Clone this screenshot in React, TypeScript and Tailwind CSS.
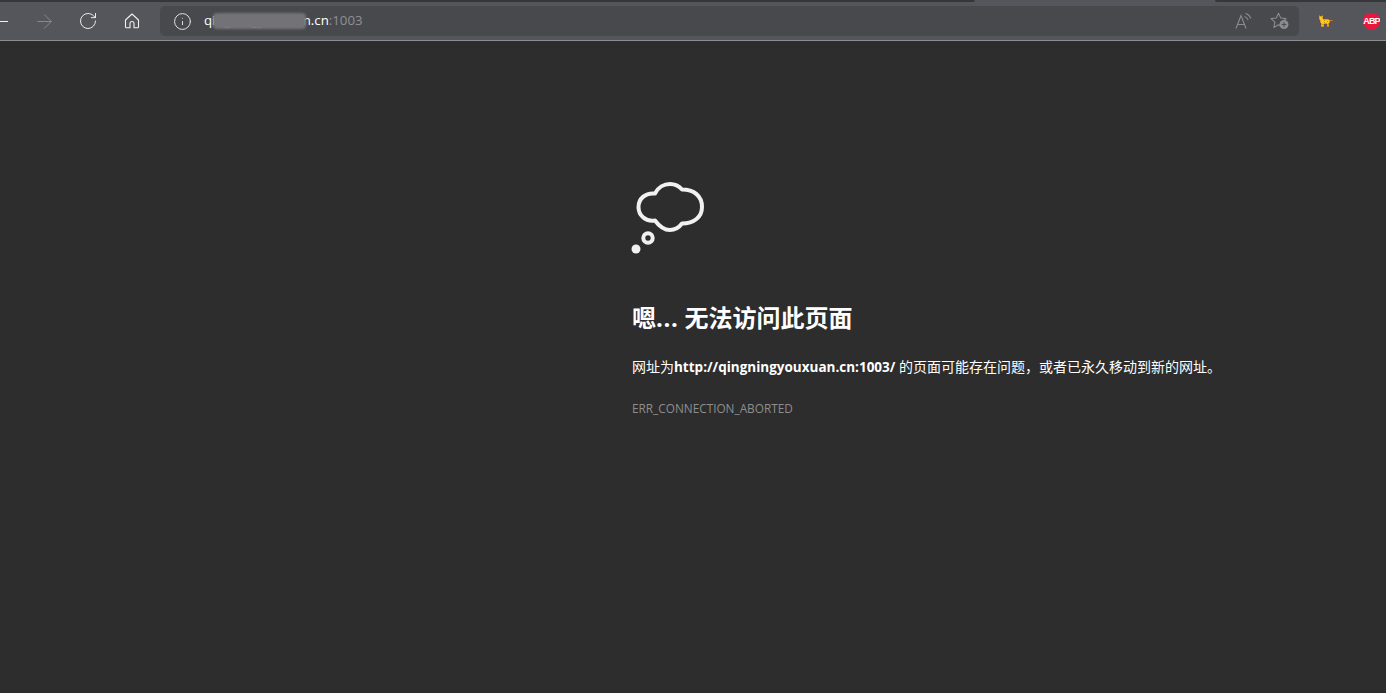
import { ArrowRight, RotateCw, Info } from "lucide-react";

const cjk = "font-['Open_Sans','Noto_Sans_CJK_SC',sans-serif]";

function HomeIcon() {
  return (
    <svg width="16" height="16" viewBox="0 0 16 16" fill="none" stroke="#f0f0f0" strokeWidth="1.100" strokeLinejoin="round">
      <path d="M8 1 1.500 7v7a.8.8 0 0 0 .8.8H6V10.500a2 2 0 0 1 4 0v4.300h3.700a.8.800 0 0 0 .8-.8V7z" />
    </svg>
  );
}

function ReadAloud() {
  return (
    <svg width="20" height="18" viewBox="0 0 20 18" fill="none" stroke="#8b8c90" strokeWidth="1.100">
      <path d="M2 16.500 7 3.500l5 13M3.500 12.500h7" />
      <path d="M10.500 4.500c1.800.5 3 1.700 3.600 3.500M11.500 1.500c2.700.7 4.400 2.500 5.300 5" />
    </svg>
  );
}

function StarAdd() {
  return (
    <svg width="20" height="18" viewBox="0 0 20 18" fill="none">
      <path d="M8.500 1.200 10.700 6l5.300.6-3.900 3.600 1 5.200-4.600-2.600-4.600 2.600 1-5.200L1 6.600l5.300-.6z" stroke="#8b8c90" strokeWidth="1.100" strokeLinejoin="round" />
      <circle cx="14" cy="12.500" r="4.500" fill="#8b8c90" />
      <path d="M14 10.200v4.600M11.700 12.500h4.600" stroke="#4a4b4f" strokeWidth="1.100" />
    </svg>
  );
}

function Cat() {
  return (
    <svg width="16" height="13" viewBox="0 0 16 13">
      <path d="M1 0h1v1h2V0h1v4h6v1h4v1h-3v2h-1v4H9V9H6v3H3V8H2V5H1z" fill="#f7cf12" stroke="#8a3a50" strokeWidth=".6" />
      <path d="M6 5h1v1H6zM9 6h1v1H9zM6 7h1v1H6zM8 8h1v1H8zM4 9h1v1H4zM10 9h1v1h-1z" fill="#c9920a" />
    </svg>
  );
}

function Abp() {
  return (
    <div className="relative flex h-[17px] w-[17px] items-center justify-center bg-[#e8173f] [clip-path:polygon(30%_0,70%_0,100%_30%,100%_70%,70%_100%,30%_100%,0_70%,0_30%)]">
      <span className="font-['Liberation_Sans',sans-serif] text-[9px] leading-none font-bold tracking-[-0.900px] text-white">ABP</span>
    </div>
  );
}

function Cloud() {
  return (
    <svg width="76" height="80" viewBox="0 0 76 80" fill="none" stroke="#f1f1f1">
      <path
        d="M27 15.500C30 9.500 36 6 42 6c5 0 9 2 12 5.500C66 11.500 74 18 74 29c0 10-8 16.500-20 16.500C51 49.500 47 52 42 52c-6 0-11-4-15-9.500C17 44 10.500 37 10.500 29c0-8 6.500-14.500 16.500-13.500z"
        strokeWidth="4"
        strokeLinejoin="round"
      />
      <circle cx="20" cy="60" r="4.700" strokeWidth="4" />
      <circle cx="8" cy="71" r="4.500" fill="#f1f1f1" stroke="none" />
    </svg>
  );
}

export default function App() {
  return (
    <div className={`flex h-[693px] w-[1386px] flex-col overflow-hidden bg-[#2d2d2d] ${cjk}`}>
      <header className="relative h-[41px] shrink-0 border-b border-[#8d8e92] bg-[#55565b]">
        <div className="flex h-[2px] justify-between">
          <div className="h-full w-[975px] rounded-br bg-[#36373a]" />
          <div className="h-full w-[171px] rounded-bl bg-[#36373a]" />
        </div>
        <div className="flex h-[38px] items-center">
          <div className="mr-[25px] h-px w-2 bg-[#f0f0f0]" />
          <ArrowRight size={23} strokeWidth={0.9} className="mr-[22px] text-[#8f9094]" />
          <RotateCw size={20} strokeWidth={1.150} className="mr-[26px] text-[#f0f0f0]" />
          <div className="mr-[20px]">
            <HomeIcon />
          </div>
          <div className="flex h-[30px] w-[1139px] items-center rounded-[5px] bg-[#48494d] pl-[13px]">
            <Info size={19} strokeWidth={1.150} className="mr-[12px] text-[#f0f0f0]" />
            <div className="relative text-[13.250px] leading-none text-[#8f9094]">
              <span className="text-white">qingningyouxuan.cn</span>:1003
              <div className="absolute top-[-1px] left-[9px] h-[16px] w-[93px] rounded-sm bg-[#737377] blur-[1px]" />
            </div>
            <div className="ml-auto flex items-center gap-[16px] pr-[9px]">
              <ReadAloud />
              <StarAdd />
            </div>
          </div>
          <div className="ml-[19px] flex items-center gap-[29px]">
            <Cat />
            <Abp />
          </div>
        </div>
      </header>
      <main className="flex flex-1 flex-col pt-[137px] pl-[632px]">
        <div className="-ml-[4px]">
          <Cloud />
        </div>
        <h1 className="mt-[44px] text-[24px] leading-[32px] font-bold text-white">
          嗯<span className="tracking-[0.600px]">...</span> 无法访问此页面
        </h1>
        <p className="mt-[23px] text-[14px] leading-[20px] text-white">
          网址为<b className="text-[13.500px]">http://qingningyouxuan.cn:1003/</b> 的页面可能存在问题，或者已永久移动到新的网址。
        </p>
        <p className="mt-[22px] text-[11.800px] leading-[18px] text-[#8d8d8d]">ERR_CONNECTION_ABORTED</p>
      </main>
    </div>
  );
}
